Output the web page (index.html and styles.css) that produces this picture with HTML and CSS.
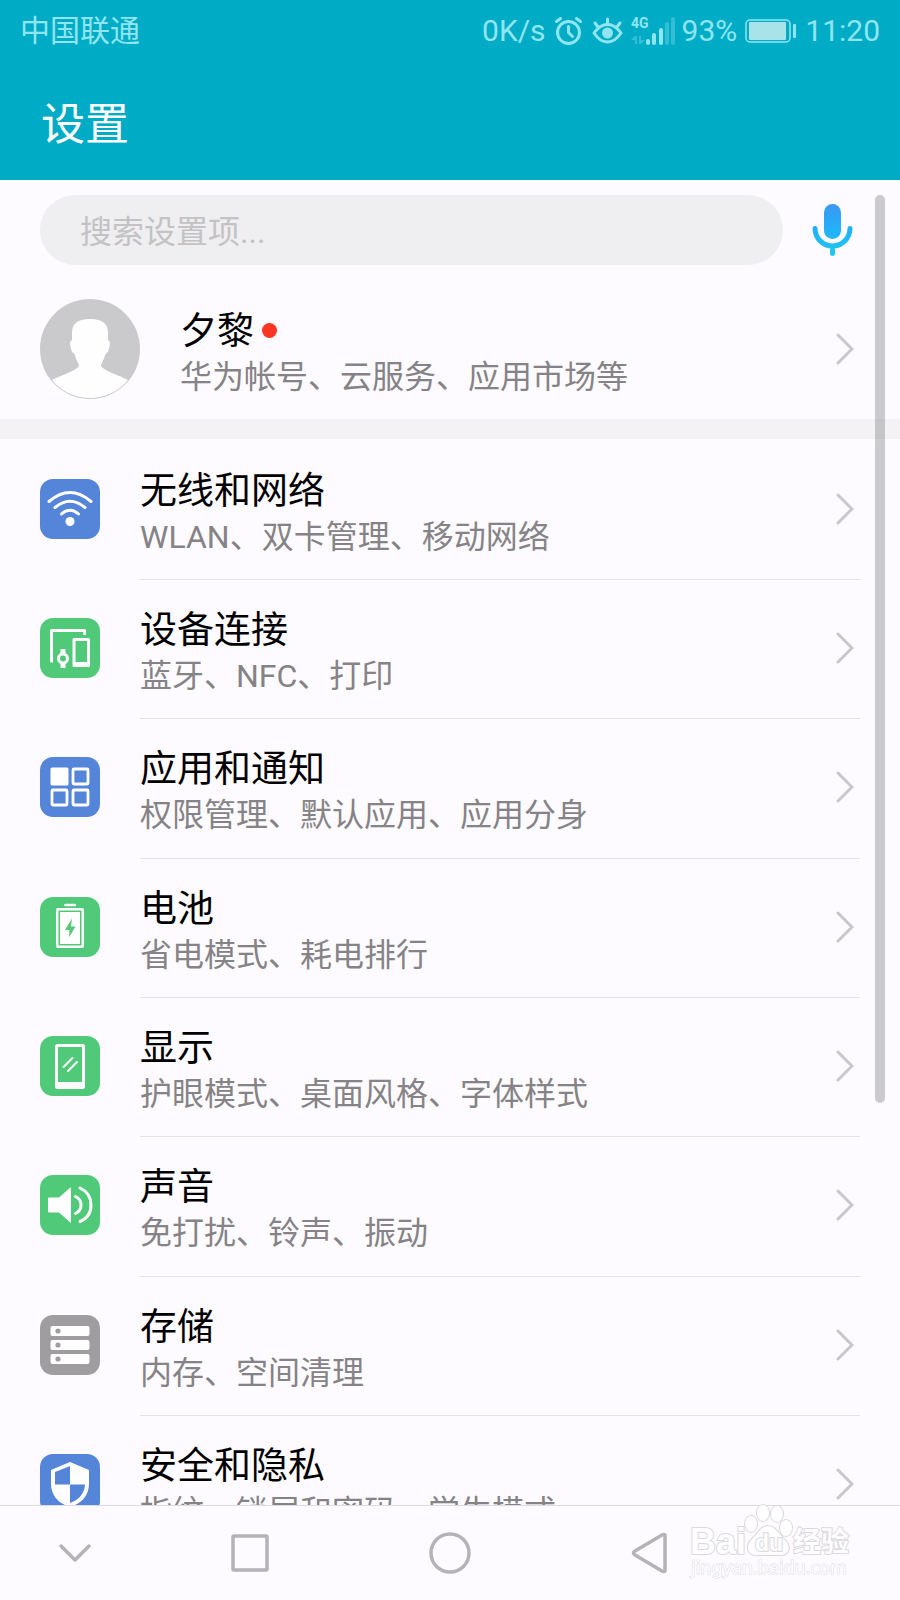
FILE: index.html
```html
<!DOCTYPE html>
<html lang="zh-CN">
<head>
<meta charset="utf-8">
<meta name="viewport" content="width=device-width, initial-scale=1">
<title>设置</title>
<link rel="stylesheet" href="styles.css">
</head>
<body>
<svg class="defs" aria-hidden="true">
  <symbol id="chevron" viewBox="0 0 18 32"><path d="M2 2L16 16L2 30" fill="none" stroke="currentColor" stroke-width="3" stroke-linecap="round" stroke-linejoin="miter"/></symbol>
</svg>
<div class="phone">
  <header class="header">
    <div class="status">
      <span class="carrier">中国联通</span>
      <span>0K/s</span>
      <svg class="alarm" viewBox="4 0 34 30" fill="none" stroke="currentColor" stroke-width="3" stroke-linecap="round" stroke-linejoin="round" aria-hidden="true"><circle cx="20.500" cy="16.500" r="11"/><path d="M20.500 10.500v6l4 4M8.500 5.500l4-3M28.500 2.500l4 3"/></svg>
      <svg class="eye" viewBox="0 0 32 30" fill="none" stroke="currentColor" stroke-width="3" stroke-linecap="round" stroke-linejoin="round" aria-hidden="true"><path d="M2 17Q8 8.500 15.500 8.500T29 17Q23 26 15.500 26T2 17zM15.500 8V3M6 11L3 7M25 11l3-4"/><circle cx="15.500" cy="17" r="5.500" fill="currentColor" stroke="none"/></svg>
      <svg class="signal" viewBox="-1 0 46 30" aria-hidden="true"><text x="0" y="12">4G</text><g fill="currentColor"><rect x="15" y="23" width="4" height="6" rx="2"/><rect x="21" y="17" width="4" height="12" rx="2"/><rect x="28" y="12" width="4" height="17" rx="2"/><g opacity=".35"><rect x="34" y="6" width="4" height="23" rx="2"/><rect x="40" y="1" width="4" height="28" rx="2"/><path d="M0 24l4-4h2v8H4v-4zM8 20h2v4h4l-4 4H8z"/></g></g></svg>
      <span>93%</span>
      <svg class="battery" viewBox="-2 0 56 30" aria-hidden="true"><rect x="1" y="4" width="44" height="22" rx="4" fill="none" stroke="currentColor" stroke-width="1.500"/><rect x="4" y="6" width="37" height="18" rx="1" fill="#a8e3ea"/><rect x="48" y="8" width="3" height="14" rx="1" fill="currentColor"/></svg>
      <span>11:20</span>
    </div>
    <h1 class="page-title">设置</h1>
  </header>

  <main class="content">
    <form class="search">
      <input class="search-input" type="search" placeholder="搜索设置项..." aria-label="搜索设置项">
      <button class="mic" type="button" aria-label="语音搜索">
        <svg viewBox="0 0 42 54" aria-hidden="true"><defs><linearGradient id="mic-fill" gradientUnits="userSpaceOnUse" x1="0" y1="0" x2="0" y2="54"><stop offset="0" stop-color="#3b97f5"/><stop offset=".55" stop-color="#20b4f8"/><stop offset="1" stop-color="#20cbe8"/></linearGradient></defs><rect x="12" y="1" width="17" height="35" rx="8.500" fill="url(#mic-fill)"/><path d="M3 25.500a17.500 17.500 0 0 0 35 0M20.500 43v7.500" fill="none" stroke="url(#mic-fill)" stroke-width="5" stroke-linecap="round"/></svg>
      </button>
    </form>

    <a class="account" href="#account">
      <svg class="avatar" viewBox="0 0 100 100" aria-hidden="true"><defs><clipPath id="avatar-clip"><circle cx="50" cy="50" r="49"/></clipPath></defs><circle cx="50" cy="50" r="50" fill="#cac9cc"/><path clip-path="url(#avatar-clip)" fill="#fefdff" d="M50 20C37 20 32 25 32 34V41C29 42 30 47 32 53Q34 54 35 56C36 62 39 64 39 67Q38 69 34 71C25 76 17 78 12 81V100H88V81C83 78 75 76 66 71Q62 69 61 67C61 64 64 62 65 56Q66 54 68 53C70 47 71 42 68 41V34C68 25 63 20 50 20z"/></svg>
      <span class="label"><span class="title">夕黎<i class="dot"></i></span><span class="sub">华为帐号、云服务、应用市场等</span></span>
      <svg class="chevron" aria-hidden="true"><use href="#chevron"/></svg>
    </a>

    <ul class="list">
      <li><a class="row" href="#network">
        <svg class="icon blue" viewBox="0 0 60 60" aria-hidden="true"><g fill="none" stroke="#fff" stroke-width="3" stroke-linecap="round"><path d="M9 22.500Q30 4.500 51 22.500M15 28.500Q30 16 45 28.500M21.500 35Q30 27.500 38.500 35"/></g><circle cx="30" cy="42.500" r="4.500" fill="#fff"/></svg>
        <span class="body"><span class="label"><span class="title">无线和网络</span><span class="sub">WLAN、双卡管理、移动网络</span></span><svg class="chevron" aria-hidden="true"><use href="#chevron"/></svg></span>
      </a></li>
      <li><a class="row" href="#devices">
        <svg class="icon green" viewBox="0 0 60 60" aria-hidden="true"><g fill="none" stroke="#fff" stroke-width="3" stroke-linejoin="round"><path d="M13 43H11.500V12.500H44.500V17"/><rect x="34" y="21.500" width="14.500" height="26"/><circle cx="23" cy="40.500" r="4.500"/></g><path fill="#fff" d="M33 44h16v5H33zM20.500 31h5v5h-5zM20.500 45h5v5h-5z"/></svg>
        <span class="body"><span class="label"><span class="title">设备连接</span><span class="sub">蓝牙、NFC、打印</span></span><svg class="chevron" aria-hidden="true"><use href="#chevron"/></svg></span>
      </a></li>
      <li><a class="row" href="#apps">
        <svg class="icon blue" viewBox="0 0 60 60" aria-hidden="true"><rect x="10.500" y="10.500" width="18" height="18" rx="1.500" fill="#fff"/><g fill="none" stroke="#fff" stroke-width="2.800"><rect x="33" y="12" width="15" height="15" rx="1"/><rect x="12" y="33" width="15" height="15" rx="1"/><rect x="33" y="33" width="15" height="15" rx="1"/></g></svg>
        <span class="body"><span class="label"><span class="title">应用和通知</span><span class="sub">权限管理、默认应用、应用分身</span></span><svg class="chevron" aria-hidden="true"><use href="#chevron"/></svg></span>
      </a></li>
      <li><a class="row" href="#battery">
        <svg class="icon green" viewBox="0 0 60 60" aria-hidden="true"><path d="M25.500 8H35" stroke="#fff" stroke-width="2.500" stroke-linecap="round"/><rect x="17.200" y="12.200" width="25.600" height="37.600" rx="1" fill="none" stroke="#fff" stroke-width="2.500"/><rect x="20" y="15" width="20" height="32" fill="#fff"/><path d="M32 21.500L25 33h4.500L29 40.500L35.500 29.500H31z" fill="#55c978"/></svg>
        <span class="body"><span class="label"><span class="title">电池</span><span class="sub">省电模式、耗电排行</span></span><svg class="chevron" aria-hidden="true"><use href="#chevron"/></svg></span>
      </a></li>
      <li><a class="row" href="#display">
        <svg class="icon green" viewBox="0 0 60 60" aria-hidden="true"><rect x="16.500" y="9.500" width="27" height="42" rx="1" fill="none" stroke="#fff" stroke-width="3"/><path d="M16 46h28v6H16z" fill="#fff"/><path d="M23.500 31l9-9M28 35l9-9" stroke="#fff" stroke-width="2" stroke-linecap="round"/></svg>
        <span class="body"><span class="label"><span class="title">显示</span><span class="sub">护眼模式、桌面风格、字体样式</span></span><svg class="chevron" aria-hidden="true"><use href="#chevron"/></svg></span>
      </a></li>
      <li><a class="row" href="#sound">
        <svg class="icon green" viewBox="0 0 60 60" aria-hidden="true"><path d="M9 22.500H19L31 12V48L19 37.500H9Q8 37.500 8 36.500V23.500Q8 22.500 9 22.500z" fill="#fff"/><path d="M35.500 21.500Q41 24 41 30T35.500 38.500M40 13Q51 18 51 30T40 46.500" fill="none" stroke="#fff" stroke-width="3" stroke-linecap="round"/></svg>
        <span class="body"><span class="label"><span class="title">声音</span><span class="sub">免打扰、铃声、振动</span></span><svg class="chevron" aria-hidden="true"><use href="#chevron"/></svg></span>
      </a></li>
      <li><a class="row" href="#storage">
        <svg class="icon gray" viewBox="0 0 60 60" aria-hidden="true"><g fill="#fff"><rect x="10.500" y="11" width="39" height="10" rx="2"/><rect x="10.500" y="25" width="39" height="10" rx="2"/><rect x="10.500" y="39" width="39" height="10" rx="2"/></g><g fill="#9f9da0"><circle cx="18" cy="16" r="2.600"/><circle cx="18" cy="30" r="2.600"/><circle cx="18" cy="44" r="2.600"/></g></svg>
        <span class="body"><span class="label"><span class="title">存储</span><span class="sub">内存、空间清理</span></span><svg class="chevron" aria-hidden="true"><use href="#chevron"/></svg></span>
      </a></li>
      <li><a class="row" href="#security">
        <svg class="icon blue" viewBox="0 0 60 60" aria-hidden="true"><path d="M30 8L49 16V29Q49 47 30 53Q11 47 11 29V16z" fill="#fff"/><path d="M30 12V30.500H15V18zM30 30.500H45Q44 44 30 49z" fill="#5585d8"/></svg>
        <span class="body"><span class="label"><span class="title">安全和隐私</span><span class="sub">指纹、锁屏和密码、学生模式</span></span><svg class="chevron" aria-hidden="true"><use href="#chevron"/></svg></span>
      </a></li>
    </ul>
    <div class="scroll-thumb"></div>
  </main>

  <nav class="navbar" aria-label="系统导航">
    <button class="nav-button" type="button" aria-label="收起"><svg viewBox="0 0 44 44"><path d="M8 15L22 29L36 15"/></svg></button>
    <button class="nav-button" type="button" aria-label="最近任务"><svg viewBox="0 0 44 44"><rect x="5" y="5" width="34" height="34" rx="1"/></svg></button>
    <button class="nav-button" type="button" aria-label="主屏幕"><svg viewBox="0 0 44 44"><circle cx="22" cy="22" r="19"/></svg></button>
    <button class="nav-button" type="button" aria-label="返回"><svg viewBox="0 0 44 44"><path d="M37 4V40Q36 41 34 40L7 24Q4 22 7 20L34 4Q36 3 37 4z"/></svg></button>
  </nav>

  <div class="watermark">
    <svg viewBox="0 0 170 90" role="img" aria-label="Baidu 经验">
      <g class="mark"><ellipse cx="68" cy="31" rx="6" ry="8"/><ellipse cx="80" cy="20" rx="6" ry="8"/><ellipse cx="94" cy="21" rx="6" ry="8"/><ellipse cx="103" cy="35" rx="6" ry="8"/><path d="M85 33C92 33 95 40 101 46C109 54 106 62 98 62H73C64 62 62 53 69 46C75 40 78 33 85 33z"/></g>
      <text class="brand" x="7" y="61">Bai</text>
      <text class="du" x="72" y="58">du</text>
      <text class="cn" x="110" y="59">经验</text>
      <text class="site" x="8" y="81">jingyan.baidu.com</text>
    </svg>
  </div>
</div>
</body>
</html>
```

FILE: styles.css
```css
* {
  box-sizing: border-box;
}

body {
  margin: 0;
  background: #fdfbff;
  color: #000;
  font-family: Roboto, "Noto Sans CJK SC", sans-serif;
}

a {
  color: inherit;
  text-decoration: none;
}

button {
  padding: 0;
  border: 0;
  background: none;
}

.defs {
  display: none;
}

.phone {
  position: relative;
  display: flex;
  flex-direction: column;
  height: 100vh;
  overflow: hidden;
}

/* Header */
.header {
  flex: none;
  padding-bottom: 22px;
  background: #00abc6;
}

.status {
  display: flex;
  align-items: center;
  gap: 6px;
  height: 62px;
  padding: 0 20px;
  color: #8fe6f1;
  font-size: 30px;
  line-height: 40px;
}

.status svg {
  flex: none;
  height: 30px;
}

.carrier {
  margin-right: auto;
}

.alarm { width: 34px; }
.eye { width: 32px; }
.signal { width: 46px; }
.battery { width: 56px; }

.signal text {
  fill: currentColor;
  font-family: Roboto, sans-serif;
  font-size: 14px;
  font-weight: 700;
}

.page-title {
  margin: 30px 41px 0;
  color: #fff;
  font-size: 44px;
  font-weight: 400;
  line-height: 66px;
}

/* Content */
.content {
  position: relative;
  flex: 1;
  min-height: 0;
  overflow: hidden;
}

.search {
  display: flex;
  align-items: center;
  gap: 29px;
  padding: 15px 46px 0 40px;
}

.search-input {
  flex: 1;
  min-width: 0;
  height: 70px;
  padding: 4px 40px 0;
  border: 0;
  border-radius: 35px;
  background: #efeef0;
  font: inherit;
  font-size: 32px;
  appearance: none;
}

.search-input::placeholder {
  color: #c3c2c5;
  opacity: 1;
}

.mic {
  width: 42px;
  height: 54px;
}

.mic svg {
  display: block;
  width: 100%;
}

.account {
  display: flex;
  align-items: center;
  gap: 40px;
  height: 174px;
  padding: 14px 46px 0 40px;
  border-bottom: 20px solid #f4f2f5;
}

.avatar {
  flex: none;
  width: 100px;
  height: 100px;
}

.label {
  flex: 1;
  min-width: 0;
  padding-top: 8px;
}

.title,
.sub {
  display: block;
  white-space: nowrap;
}

.title {
  font-size: 37px;
  line-height: 48px;
}

.sub {
  color: #858386;
  font-size: 32px;
  line-height: 42px;
}

.dot {
  display: inline-block;
  width: 15px;
  height: 15px;
  margin-left: 8px;
  border-radius: 50%;
  background: #fb3524;
  vertical-align: 6px;
}

.chevron {
  flex: none;
  width: 18px;
  height: 32px;
  color: #c8c7ca;
}

.list {
  margin: 0;
  padding: 1px 40px 0;
  list-style: none;
}

.row {
  display: flex;
  align-items: center;
  gap: 40px;
  height: 139px;
  padding-bottom: 2px;
}

.list li:nth-child(3n) .row {
  height: 140px;
}

.body {
  flex: 1;
  display: flex;
  align-items: center;
  align-self: stretch;
  min-width: 0;
  padding-right: 6px;
}

.list li + li .body {
  box-shadow: inset 0 1px #e4e2e6;
}

.icon {
  flex: none;
  width: 60px;
  height: 60px;
  border-radius: 13px;
}

.blue { background: #5585d8; }
.green { background: #50ca78; }
.gray { background: #9f9da0; }

.scroll-thumb {
  position: absolute;
  top: 15px;
  right: 15px;
  width: 10px;
  height: 68.5%;
  border-radius: 5px;
  background: rgba(90, 88, 92, .3);
}

/* System navigation */
.navbar {
  flex: none;
  display: grid;
  grid-template-columns: 3fr 4fr 4fr 4fr 3fr;
  height: 95px;
  border-top: 1px solid #dddbdf;
}

.nav-button {
  display: grid;
  place-items: center;
}

.nav-button svg {
  width: 44px;
  height: 44px;
  fill: none;
  stroke: #b5b3b7;
  stroke-width: 3.5;
  stroke-linecap: round;
  stroke-linejoin: round;
}

/* Watermark over the bottom corner */
.watermark {
  position: absolute;
  right: 47px;
  bottom: 17px;
  width: 170px;
  height: 90px;
  pointer-events: none;
}

.watermark svg {
  display: block;
  overflow: visible;
}

.watermark text,
.mark {
  fill: #fefdff;
  stroke: #dbd9dd;
  stroke-width: 2px;
  paint-order: stroke;
}

.brand {
  font: 700 36px "Liberation Sans", sans-serif;
}

.du {
  font: 700 23px "Liberation Sans", sans-serif;
}

.cn {
  font: 700 28px "Noto Sans CJK SC", sans-serif;
}

.watermark .site {
  font: 400 18px "Noto Sans", sans-serif;
  stroke-width: 1px;
}
```
